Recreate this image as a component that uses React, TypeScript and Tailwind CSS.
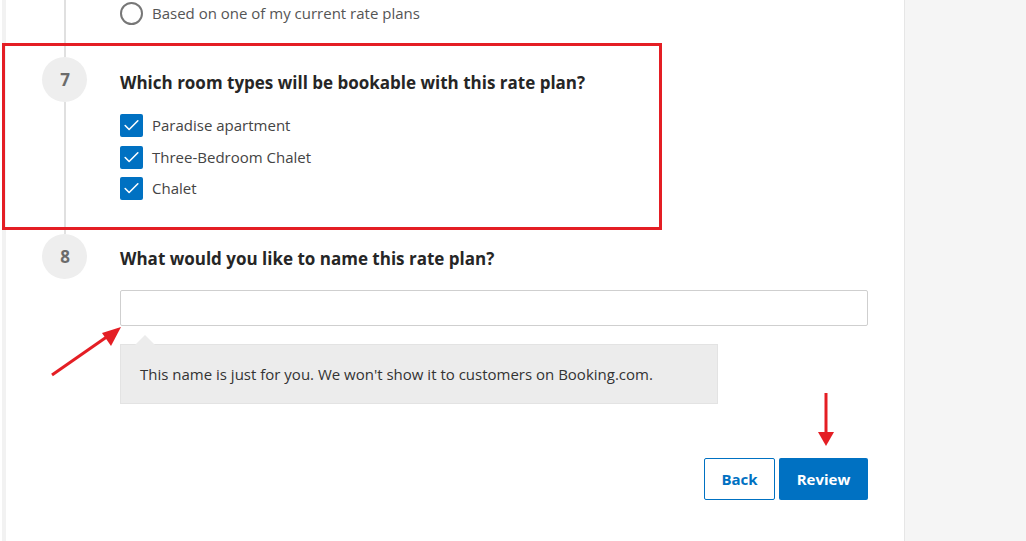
import { Check } from 'lucide-react';

const ROOM_TYPES = ['Paradise apartment', 'Three-Bedroom Chalet', 'Chalet'];

function StepBadge({ n }: { n: number }) {
  return (
    <div className="ml-[36px] flex h-[45px] w-[45px] shrink-0 items-center justify-center rounded-full bg-[#eeeeee] pl-[1px] text-[17px] font-bold text-[#6b6b6b]">
      {n}
    </div>
  );
}

function Rail() {
  return <div className="ml-[58px] w-[2px] flex-1 bg-[#e0e0e0]" />;
}

export default function App() {
  return (
    <div
      className="relative flex h-[541px] w-[1026px] overflow-hidden bg-white text-[#333]"
      style={{ fontFamily: '"Open Sans", "Noto Sans", Arial, sans-serif' }}
    >
      <div className="w-[2px] bg-white" />
      <div className="w-[4px] bg-[#f2f2f2]" />

      <main className="flex w-[898px] flex-col">
        {/* tail of step 6 */}
        <div className="flex">
          <div className="flex w-[114px] flex-col">
            <Rail />
          </div>
          <label className="flex h-[57px] items-start gap-[9px] pt-[2px]">
            <span className="h-[23px] w-[23px] rounded-full border-2 border-[#777]" />
            <span className="text-[15px] leading-[23px] text-[#555]">Based on one of my current rate plans</span>
          </label>
        </div>

        {/* step 7 */}
        <div className="flex h-[177px]">
          <div className="flex w-[114px] flex-col">
            <StepBadge n={7} />
            <Rail />
          </div>
          <div className="flex flex-col pt-[14px]">
            <h2 className="text-[17px] font-bold leading-[24px] text-[#262626]">
              Which room types will be bookable with this rate plan?
            </h2>
            <div className="mt-[19px] flex flex-col gap-[8.5px]">
              {ROOM_TYPES.map((room) => (
                <label key={room} className="flex items-center gap-[9px]">
                  <span className="flex h-[23px] w-[23px] items-center justify-center rounded-[2px] bg-[#0071c2]">
                    <Check className="h-[19px] w-[19px] text-white" strokeWidth={2} />
                  </span>
                  <span className="text-[15px] leading-[23px] text-[#444]">{room}</span>
                </label>
              ))}
            </div>
          </div>
        </div>

        {/* step 8 */}
        <div className="flex flex-1">
          <div className="flex w-[114px] flex-col">
            <StepBadge n={8} />
          </div>
          <div className="flex flex-col pt-[13px]">
            <h2 className="text-[17px] font-bold leading-[24px] text-[#262626]">
              What would you like to name this rate plan?
            </h2>
            <input
              type="text"
              className="mt-[19px] h-[36px] w-[748px] rounded-[2px] border border-[#cfcfcf] bg-white px-2 text-[15px] outline-none"
            />
            <div className="relative mt-[18px] w-[598px] border border-[#e3e3e3] bg-[#ececec] py-[19px] pl-[19px] text-[15px] leading-[20px] text-[#333]">
              <span className="absolute -top-[10px] left-[14px] h-0 w-0 border-x-[10px] border-b-[10px] border-x-transparent border-b-[#ececec]" />
              This name is just for you. We won't show it to customers on Booking.com.
            </div>
            <div className="mt-[54px] flex justify-end gap-[4px]">
              <button className="h-[42px] w-[71px] rounded-[2px] border border-[#0071c2] bg-white text-[15px] font-bold text-[#0071c2]">
                Back
              </button>
              <button className="h-[42px] w-[89px] rounded-[2px] bg-[#0071c2] text-[15px] font-bold text-white">
                Review
              </button>
            </div>
          </div>
        </div>
      </main>

      <aside className="flex-1 border-l border-[#e6e6e6] bg-[#f5f5f5]" />

      {/* highlight frame and pointers */}
      <div className="pointer-events-none absolute left-[2px] top-[43px] h-[187px] w-[660px] border-[3px] border-[#e41e24]" />
      <svg className="pointer-events-none absolute left-0 top-0" width="1026" height="541">
        <line x1="52" y1="375" x2="108" y2="336" stroke="#e41e24" strokeWidth="3" />
        <polygon points="121,327 102,333 111,346" fill="#e41e24" />
        <line x1="826" y1="393" x2="826" y2="434" stroke="#e41e24" strokeWidth="3" />
        <polygon points="818,432 834,432 826,446" fill="#e41e24" />
      </svg>
    </div>
  );
}
